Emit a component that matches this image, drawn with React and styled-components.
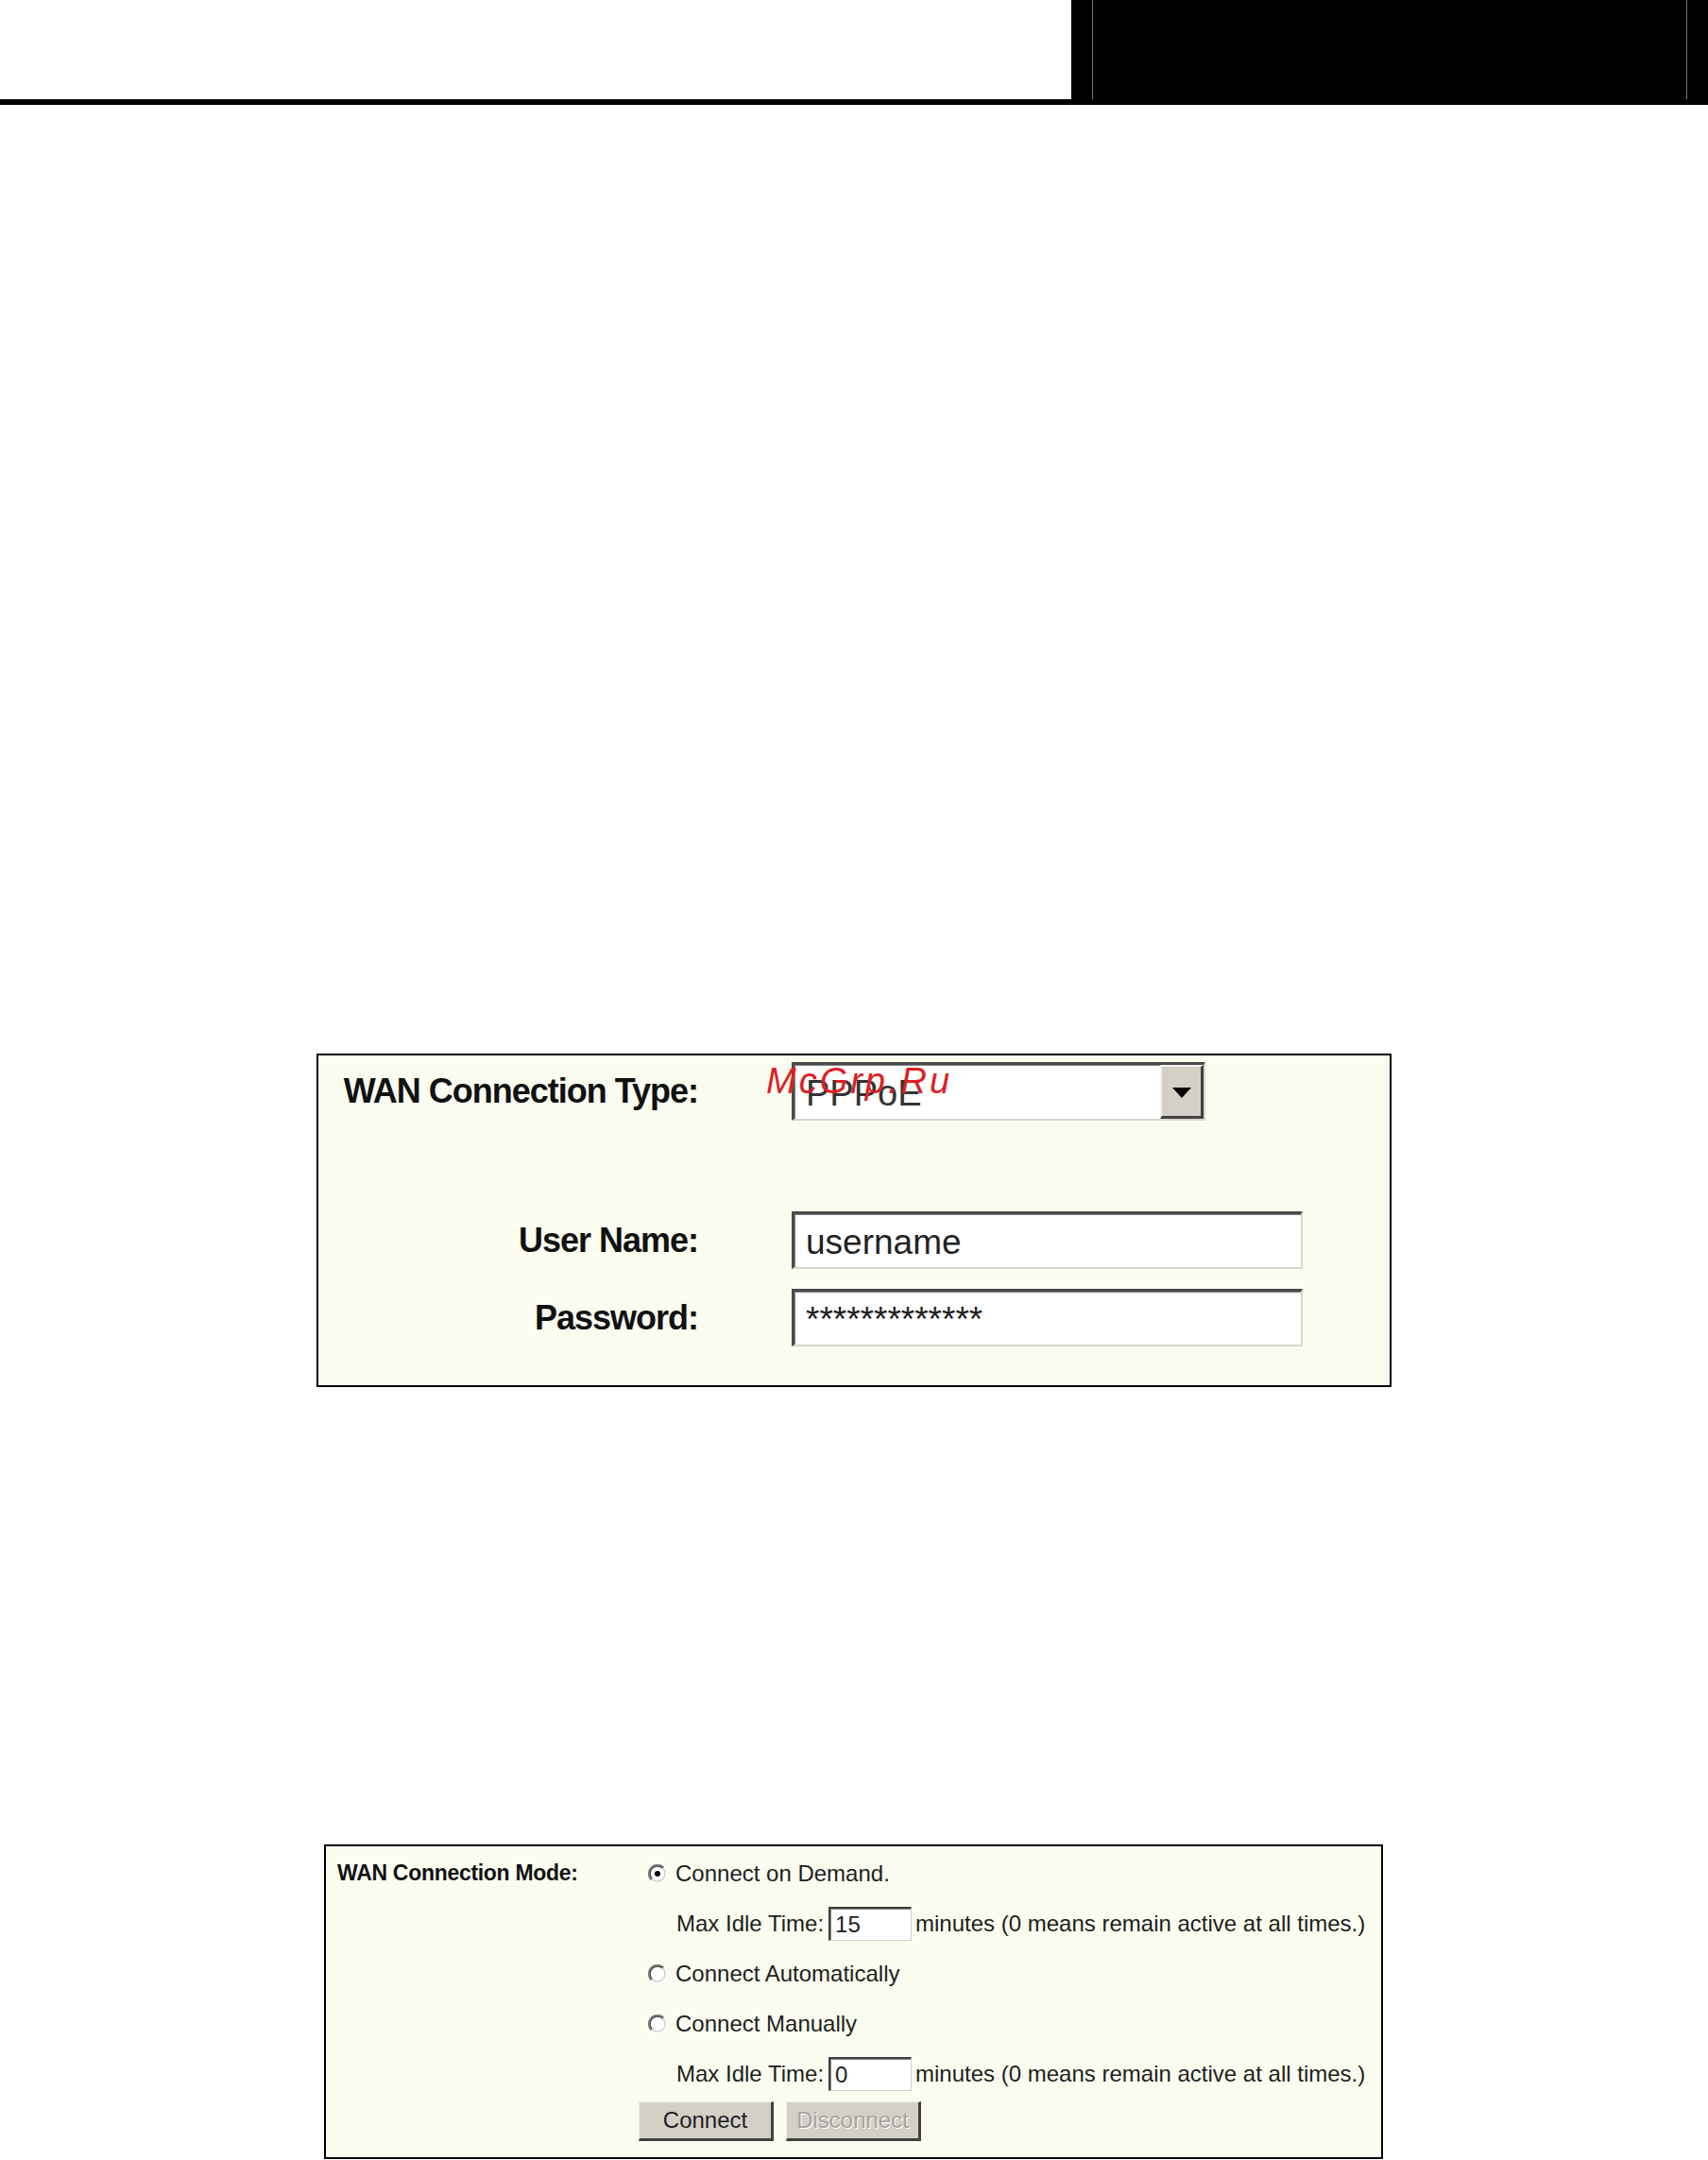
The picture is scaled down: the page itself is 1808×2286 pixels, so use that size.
import React from 'react';
import styled, { createGlobalStyle } from 'styled-components';

const GlobalStyle = createGlobalStyle`
  body {
    margin: 0;
    background: #fff;
    font-family: "Liberation Sans", Arial, sans-serif;
  }
`;

const Page = styled.div`
  width: 1808px;
  height: 2286px;
  overflow: hidden;
  display: flex;
  flex-direction: column;
`;

/* top strip: thick rule on the left, black tab on the right */
const Header = styled.div`
  display: flex;
  height: 111px;
  flex-shrink: 0;
`;
const HeaderRule = styled.div`
  flex: 1;
  border-bottom: 6px solid #000;
`;
const HeaderBlock = styled.div`
  width: 674px;
  box-sizing: border-box;
  background: #000;
  padding: 0 22px 6px;
`;
const HeaderFrame = styled.div`
  height: 100%;
  border-left: 1px solid #777;
  border-right: 1px solid #777;
`;

const Panel = styled.div`
  position: relative;
  flex-shrink: 0;
  box-sizing: border-box;
  margin-top: ${p => p.$top}px;
  margin-left: ${p => p.$left}px;
  width: ${p => p.$width}px;
  height: ${p => p.$height}px;
  padding: ${p => p.$pad};
  border: 2px solid #000;
  background: #fafcf0;
`;

/* ---- PPPoE login panel ---- */
const FieldRow = styled.div`
  display: grid;
  grid-template-columns: 377px 1fr;
  column-gap: 99px;
  align-items: center;
  margin-top: ${p => p.$gap || 0}px;
`;
const BigLabel = styled.div`
  font-weight: bold;
  font-size: 36px;
  letter-spacing: -1px;
  color: #111;
  text-align: right;
  white-space: nowrap;
`;
const SunkenBox = styled.div`
  box-sizing: border-box;
  display: flex;
  align-items: center;
  height: ${p => p.$h}px;
  width: ${p => p.$w}px;
  background: #fff;
  border-style: solid;
  border-width: 3px 2px 2px 3px;
  border-color: #4a4a4a #d8d5cc #d8d5cc #4a4a4a;
  box-shadow: inset 1px 1px 0 #808080;
`;
const SelectValue = styled.div`
  flex: 1;
  padding: 4px 0 0 12px;
  font-size: 38px;
  color: #333;
`;
const DropButton = styled.div`
  align-self: stretch;
  width: 46px;
  box-sizing: border-box;
  display: flex;
  align-items: center;
  justify-content: center;
  background: #d4d0c8;
  border-style: solid;
  border-width: 2px 3px 3px 2px;
  border-color: #f4f3ee #404040 #404040 #f4f3ee;
`;
const Arrow = styled.span`
  width: 0;
  height: 0;
  border-left: 10px solid transparent;
  border-right: 10px solid transparent;
  border-top: 11px solid #000;
  margin-top: 2px;
`;
const FieldText = styled.div`
  padding: 4px 0 0 12px;
  font-size: 37px;
  color: #222;
`;
const Watermark = styled.div`
  position: absolute;
  left: 474px;
  top: 8px;
  font-size: 38px;
  line-height: 38px;
  font-style: italic;
  letter-spacing: 3px;
  color: #dd1f26;
`;

/* ---- connection mode panel ---- */
const ModeGrid = styled.div`
  display: grid;
  grid-template-columns: 319px 1fr;
`;
const ModeLabel = styled.div`
  height: 53px;
  display: flex;
  align-items: center;
  font-weight: bold;
  font-size: 23px;
  letter-spacing: -0.3px;
  color: #111;
`;
const OptionList = styled.div`
  display: flex;
  flex-direction: column;
`;
const OptionRow = styled.div`
  height: 53px;
  display: flex;
  align-items: center;
  padding-left: ${p => p.$indent}px;
  font-size: 24px;
  color: #1e1e1e;
  white-space: nowrap;
`;
const RadioText = styled.span`
  margin-left: 9px;
`;
const SmallInput = styled.div`
  box-sizing: border-box;
  width: 88px;
  height: 36px;
  margin: 0 4px 0 5px;
  padding: 2px 0 0 5px;
  display: flex;
  align-items: center;
  background: #fff;
  border-style: solid;
  border-width: 2px 1px 1px 2px;
  border-color: #404040 #d4d0c8 #d4d0c8 #404040;
  box-shadow: inset 1px 1px 0 #808080;
`;
const ButtonRow = styled.div`
  display: flex;
  gap: 13px;
  margin-top: 3px;
`;
const Button = styled.div`
  box-sizing: border-box;
  width: 143px;
  height: 42px;
  display: flex;
  align-items: center;
  justify-content: center;
  background: #d4d0c8;
  border-style: solid;
  border-width: 1px 3px 3px 1px;
  border-color: #f0efea #404040 #404040 #f0efea;
  font-size: 24px;
  color: ${p => (p.$disabled ? '#a8a59d' : '#1e1e1e')};
  text-shadow: ${p => (p.$disabled ? '1px 1px 0 #fff' : 'none')};
`;

const Radio = ({ checked }) => (
  <svg width="20" height="20" viewBox="0 0 20 20">
    <circle cx="10" cy="10" r="8" fill="#fff" />
    <path d="M3.28 16.72 A9.5 9.5 0 0 1 16.72 3.28" fill="none" stroke="#808080" strokeWidth="1.5" />
    <path d="M16.72 3.28 A9.5 9.5 0 0 1 3.28 16.72" fill="none" stroke="#fff" strokeWidth="1.5" />
    <path d="M4.34 15.66 A8 8 0 0 1 15.66 4.34" fill="none" stroke="#404040" strokeWidth="1.5" />
    <path d="M15.66 4.34 A8 8 0 0 1 4.34 15.66" fill="none" stroke="#d4d0c8" strokeWidth="1.5" />
    {checked && <circle cx="10" cy="10" r="3" fill="#000" />}
  </svg>
);

const IdleTime = ({ value }) => (
  <OptionRow $indent={40}>
    Max Idle Time:
    <SmallInput>{value}</SmallInput>
    minutes (0 means remain active at all times.)
  </OptionRow>
);

const RadioOption = ({ checked, children }) => (
  <OptionRow $indent={10}>
    <Radio checked={checked} />
    <RadioText>{children}</RadioText>
  </OptionRow>
);

export default function App() {
  return (
    <Page>
      <GlobalStyle />
      <Header>
        <HeaderRule />
        <HeaderBlock>
          <HeaderFrame />
        </HeaderBlock>
      </Header>

      <Panel $top={1004} $left={335} $width={1138} $height={353} $pad="7px 0 0 25px">
        <FieldRow>
          <BigLabel>WAN Connection Type:</BigLabel>
          <SunkenBox $w={438} $h={62}>
            <SelectValue>PPPoE</SelectValue>
            <DropButton>
              <Arrow />
            </DropButton>
          </SunkenBox>
        </FieldRow>
        <FieldRow $gap={96}>
          <BigLabel>User Name:</BigLabel>
          <SunkenBox $w={541} $h={61}>
            <FieldText>username</FieldText>
          </SunkenBox>
        </FieldRow>
        <FieldRow $gap={21}>
          <BigLabel>Password:</BigLabel>
          <SunkenBox $w={541} $h={61}>
            <FieldText>*************</FieldText>
          </SunkenBox>
        </FieldRow>
        <Watermark>McGrp.Ru</Watermark>
      </Panel>

      <Panel $top={484} $left={343} $width={1121} $height={333} $pad="2px 0 0 12px">
        <ModeGrid>
          <ModeLabel>WAN Connection Mode:</ModeLabel>
          <OptionList>
            <RadioOption checked>Connect on Demand.</RadioOption>
            <IdleTime value="15" />
            <RadioOption>Connect Automatically</RadioOption>
            <RadioOption>Connect Manually</RadioOption>
            <IdleTime value="0" />
            <ButtonRow>
              <Button>Connect</Button>
              <Button $disabled>Disconnect</Button>
            </ButtonRow>
          </OptionList>
        </ModeGrid>
      </Panel>
    </Page>
  );
}
